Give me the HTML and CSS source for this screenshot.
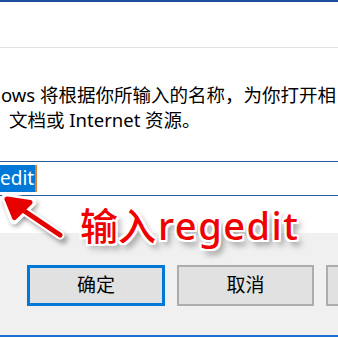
FILE: index.html
```html
<!DOCTYPE html>
<html>
    <head>
        <title>运行</title>
        <link rel="stylesheet" href="styles.css">
    </head>
    <body>
        <div class="dialog">
            <div class="header"></div>
            <div class="content">
                <p class="desc">
                    <span class="line">ows 将根据你所输入的名称，为你打开相</span>
                    <span class="line second">文档或 Internet 资源。</span>
                </p>
                <div class="field">
                    <span class="sel">edit</span><span class="caret"></span>
                </div>
            </div>
            <div class="footer">
                <div class="button focused">确定</div>
                <div class="button">取消</div>
                <div class="button"></div>
            </div>
            <div class="taskbar"></div>
        </div>

        <!-- annotation on top of the screenshot -->
        <svg class="arrow" width="80" height="60" viewBox="0 0 80 60">
            <g class="shadow">
                <path d="M9 12 L63 49" />
                <path d="M9 12 L33 15 L16 32 Z" />
            </g>
            <g class="outline">
                <path d="M8 10 L60 45" />
                <path d="M6 8 L32 12 L14 30 Z" />
            </g>
            <g class="fill">
                <path d="M8 10 L60 45" />
                <path d="M7 9 L30 12.5 L14.5 27.5 Z" />
            </g>
        </svg>
        <div class="note">输入<span class="latin">regedit</span></div>
    </body>
</html>
```

FILE: styles.css
```css
html, body {
    margin: 0;
    padding: 0;
    width: 338px;
    height: 338px;
    overflow: hidden;
}
body {
    font-family: "Noto Sans", "Noto Sans CJK SC", sans-serif;
    color: #000;
    position: relative;
}
.dialog {
    width: 338px;
    height: 338px;
    display: flex;
    flex-direction: column;
    background: #fff;
}
.header {
    height: 45px;
    border-top: 2px solid #1d4f9e;
    border-bottom: 1px solid #e3e3e3;
    flex: none;
}
.content {
    height: 185px;
    flex: none;
    overflow: hidden;
}
.desc {
    margin: 34px 0 0 0;
    font-size: 18.5px;
    line-height: 25px;
    white-space: nowrap;
}
.line {
    display: block;
    margin-left: 1px;
}
.line.second {
    margin-left: 9px;
}
.field {
    margin-top: 29px;
    height: 33px;
    width: 360px;
    border-top: 1px solid #2c5c9c;
    border-bottom: 1px solid #2c5c9c;
    display: flex;
    align-items: center;
    font-size: 19px;
}
.sel {
    background: #0078d7;
    color: #fff;
    height: 27px;
    line-height: 26px;
    padding-right: 1px;
}
.caret {
    width: 2px;
    height: 27px;
    background: #e0802a;
}
.footer {
    height: 102px;
    flex: none;
    background: #f0f0f0;
    display: flex;
    gap: 12px;
    padding: 32px 0 0 27px;
    box-sizing: border-box;
    overflow: hidden;
}
.button {
    flex: none;
    width: 133px;
    height: 37px;
    border: 2px solid #adadad;
    background: #e1e1e1;
    font-size: 19px;
    line-height: 37px;
    text-align: center;
}
.button.focused {
    width: 132px;
    height: 35px;
    line-height: 35px;
    border: 3px solid #0078d7;
}
.taskbar {
    flex: 1;
    border-top: 2px solid #1c6fd1;
    background: #fff;
}
.arrow {
    position: absolute;
    left: 0;
    top: 190px;
}
.arrow path {
    stroke-linecap: round;
    stroke-linejoin: round;
}
.arrow .shadow path {
    stroke: rgba(0, 0, 0, 0.3);
    stroke-width: 10;
    fill: rgba(0, 0, 0, 0.3);
    filter: blur(2px);
}
.arrow .outline path {
    stroke: #fff;
    stroke-width: 9;
    fill: #fff;
}
.arrow .fill path {
    stroke: #e60000;
    stroke-width: 5;
    fill: #e60000;
}
.note {
    position: absolute;
    left: 80px;
    top: 200px;
    font-family: "Noto Sans", "Noto Sans CJK SC", sans-serif;
    font-size: 38px;
    font-weight: 500;
    line-height: 50px;
    color: #f00000;
    white-space: nowrap;
    text-shadow:
        2px 0 0 #fff, -2px 0 0 #fff, 0 2px 0 #fff, 0 -2px 0 #fff,
        2px 2px 0 #fff, -2px -2px 0 #fff, 2px -2px 0 #fff, -2px 2px 0 #fff,
        4px 5px 6px rgba(0, 0, 0, 0.5);
}
.latin {
    margin-left: 2px;
    letter-spacing: 1.5px;
}
```
